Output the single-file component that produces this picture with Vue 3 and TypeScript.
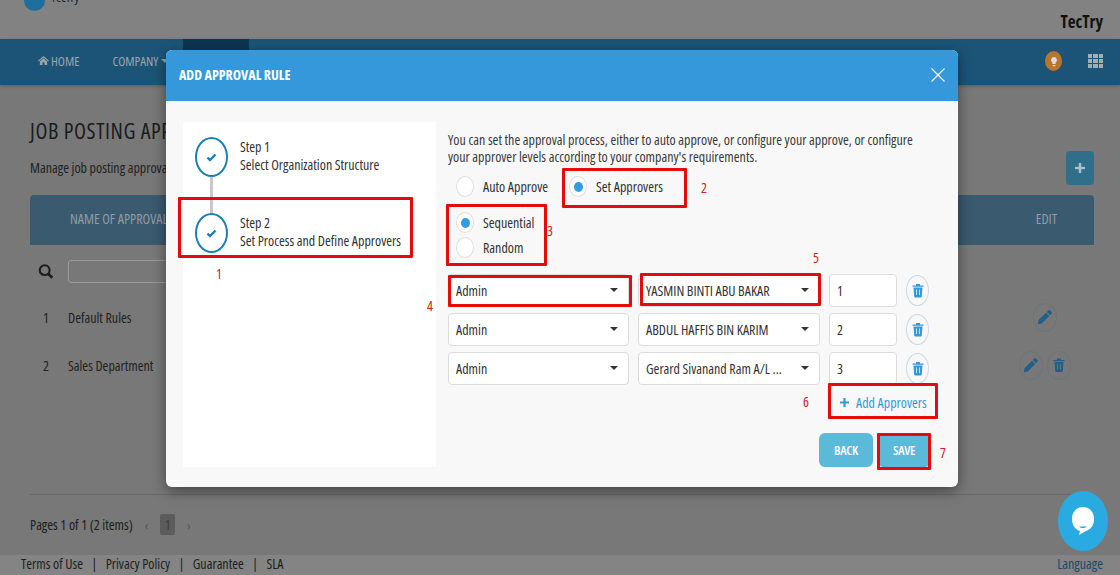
<script setup lang="ts">
interface Row { role: string; person: string; level: string }
const rows: Row[] = [
  { role: 'Admin', person: 'YASMIN BINTI ABU BAKAR', level: '1' },
  { role: 'Admin', person: 'ABDUL HAFFIS BIN KARIM', level: '2' },
  { role: 'Admin', person: 'Gerard Sivanand Ram A/L ...', level: '3' },
]
const steps = [
  { title: 'Step 1', sub: 'Select Organization Structure' },
  { title: 'Step 2', sub: 'Set Process and Define Approvers' },
]
const trashBody = 'M3.500 5h9l-.7 9a1 1 0 0 1-1 .9H5.200a1 1 0 0 1-1-.9zM2.500 3h3.500V1.500h4V3h3.500v1.200h-11z'
const pencil = 'M11.300 1.500a1.200 1.200 0 0 1 1.700 0l1.500 1.500a1.200 1.200 0 0 1 0 1.700L13 6.200 9.800 3zM9 3.800 12.200 7l-7.500 7.500-3.900.8.700-4z'
</script>

<template>
  <div class="page">
    <header class="top">
      <div class="logo"><span class="logo-mark"></span><span class="logo-text">TecTry</span></div>
      <div class="brand">TecTry</div>
    </header>
    <nav class="nav">
      <div class="nav-item home"><svg width="11" height="11" viewBox="0 0 12 12"><path d="M6 1 0 6.300l.8.7L6 2.600 11.200 7l.8-.7zM2 7v4h3V8h2v3h3V7L6 3.600z" fill="#9aa5ad"/></svg>HOME</div>
      <div class="nav-item company">COMPANY <i class="caret-nav"></i></div>
      <div class="nav-active"></div>
      <div class="nav-right">
        <span class="bulb"><svg width="12" height="14" viewBox="0 0 12 14"><path d="M6 3a3 3 0 0 0-1.600 5.500V10h3.200V8.500A3 3 0 0 0 6 3zM4.600 11h2.800v1.200H4.600z" fill="#ddd"/></svg></span>
        <div class="apps"><i v-for="n in 9" :key="n"></i></div>
      </div>
    </nav>
    <main class="main">
      <div class="title-row">
        <div>
          <h1>JOB POSTING APPROVAL</h1>
          <p class="sub">Manage job posting approval</p>
        </div>
        <span class="add-btn"><svg width="10" height="10" viewBox="0 0 10 10"><path d="M5 0v10M0 5h10" stroke="#a8c0cc" stroke-width="2.600"/></svg></span>
      </div>
      <div class="thead"><span>NAME OF APPROVAL</span><span>EDIT</span></div>
      <div class="search">
        <svg width="16" height="17" viewBox="0 0 18 18"><circle cx="7.500" cy="7.500" r="5.500" fill="none" stroke="#1d1d1d" stroke-width="2.400"/><path d="M11.500 11.500 16 16" stroke="#1d1d1d" stroke-width="3"/></svg>
        <span class="search-box"></span>
      </div>
      <div class="trow">
        <span class="num">1</span><span class="name">Default Rules</span>
        <span class="actions"><span class="ico"><svg width="16" height="16" viewBox="0 0 16 16"><path :d="pencil" fill="#1f5f88"/></svg></span></span>
      </div>
      <div class="trow">
        <span class="num">2</span><span class="name">Sales Department</span>
        <span class="actions">
          <span class="ico"><svg width="16" height="16" viewBox="0 0 16 16"><path :d="pencil" fill="#1f5f88"/></svg></span>
          <span class="ico"><svg width="16" height="16" viewBox="0 0 16 16"><path :d="trashBody" fill="#1f5f88"/><path d="M6.500 7v5.500M9.500 7v5.500" stroke="#777" stroke-width=".9"/></svg></span>
        </span>
      </div>
      <div class="pager">
        <span>Pages 1 of 1 (2 items)</span>
        <span class="pg-arrow">‹</span><span class="pg-cur">1</span><span class="pg-arrow">›</span>
      </div>
    </main>
    <footer class="foot">
      <div class="links"><span>Terms of Use</span><b>|</b><span>Privacy Policy</span><b>|</b><span>Guarantee</span><b>|</b><span>SLA</span></div>
      <span class="lang">Language</span>
    </footer>

    <div class="chat">
      <svg width="24" height="30" viewBox="0 0 24 30"><path d="M12 1C5.500 1 1 6 1 13c0 6 3.500 11 8 12l-1 4 7-4c5-1.500 8-6 8-12C23 6 18.500 1 12 1z" fill="#fff"/><path d="M8 20.500c2 2 6 2 8 0z" fill="#29abe2"/></svg>
    </div>

    <section class="modal">
      <div class="m-head">
        <span>ADD APPROVAL RULE</span>
        <svg width="14" height="14" viewBox="0 0 14 14"><path d="M.5.500l13 13M13.500.500l-13 13" stroke="#fff" stroke-width="1.100"/></svg>
      </div>
      <div class="m-body">
        <aside class="steps">
          <div v-for="(s, i) in steps" :key="s.title" class="step" :class="{ last: i === 1 }">
            <span class="step-dot"><svg width="11" height="9" viewBox="0 0 11 9"><path d="M1.500 4.500 4 7 9.500 1.500" fill="none" stroke="#1a7fb5" stroke-width="2.400"/></svg></span>
            <div class="step-text"><div>{{ s.title }}</div><div>{{ s.sub }}</div></div>
          </div>
        </aside>
        <div class="form">
          <p class="intro">You can set the approval process, either to auto approve, or configure your approve, or configure your approver levels according to your company's requirements.</p>
          <div class="radios-inline">
            <label class="radio"><i class="dot"></i>Auto Approve</label>
            <label class="radio second"><i class="dot on"></i>Set Approvers</label>
          </div>
          <div class="radios-stack">
            <label class="radio"><i class="dot on"></i>Sequential</label>
            <label class="radio"><i class="dot"></i>Random</label>
          </div>
          <div class="rows">
            <div v-for="r in rows" :key="r.level" class="row">
              <div class="sel role"><span>{{ r.role }}</span><i class="caret"></i></div>
              <div class="sel person"><span>{{ r.person }}</span><i class="caret"></i></div>
              <div class="lvl">{{ r.level }}</div>
              <span class="del"><svg width="16" height="17" viewBox="0 0 16 16"><path :d="trashBody" fill="#3498db"/><path d="M6.500 7v5.500M9.500 7v5.500" stroke="#d7ecf8" stroke-width=".9"/></svg></span>
            </div>
          </div>
          <div class="add-row"><svg width="9" height="9" viewBox="0 0 9 9"><path d="M4.500 0v9M0 4.500h9" stroke="#3498db" stroke-width="2.200"/></svg><span>Add Approvers</span></div>
          <div class="btns"><span class="btn">BACK</span><span class="btn">SAVE</span></div>
        </div>
      </div>
    </section>

    <i class="mark m1"></i><i class="mark m2"></i><i class="mark m3"></i><i class="mark m4"></i>
    <i class="mark m5"></i><i class="mark m6"></i><i class="mark m7"></i>
    <span class="tag t1">1</span><span class="tag t2">2</span><span class="tag t3">3</span><span class="tag t4">4</span>
    <span class="tag t5">5</span><span class="tag t6">6</span><span class="tag t7">7</span>
  </div>
</template>

<style>
html, body { margin: 0; padding: 0; overflow: hidden; }
</style>

<style scoped>
.page {
  position: relative; width: 1120px; height: 575px; overflow: hidden;
  display: flex; flex-direction: column;
  background: #787878; color: #2a2a2a;
  font-family: "Open Sans", sans-serif; font-stretch: 75%; font-size: 14px;
}
.top { height: 39px; flex: none; background: #828282; display: flex; justify-content: space-between; padding: 0 17px 0 24px; box-sizing: border-box; }
.logo { display: flex; gap: 6px; margin-top: -10px; height: 21px; align-items: flex-start; }
.logo-mark { width: 21px; height: 21px; border-radius: 50%; background: #1f6f9e; }
.logo-text { font-size: 13px; color: #222; line-height: 14px; }
.brand { font-size: 17px; font-weight: 700; color: #111; margin-top: 10px; line-height: 24px; }
.nav { height: 46px; flex: none; box-sizing: border-box; padding: 0 0 3px 38px; background: #1c5478; display: flex; align-items: center; color: #9aa5ad; font-size: 13px; position: relative; box-shadow: 0 1px 3px rgba(0,0,0,.25); }
.nav-item { display: flex; align-items: center; gap: 2px; }
.company { margin-left: 33px; gap: 3px; }
.caret-nav { width: 0; height: 0; border: 4px solid transparent; border-top-color: #9aa5ad; border-bottom: 0; }
.nav-active { position: absolute; left: 183px; top: 0; width: 66px; height: 46px; background: #0c3653; }
.nav-right { margin-left: auto; display: flex; align-items: center; gap: 26px; padding-right: 17px; }
.bulb { width: 17px; height: 20px; border-radius: 50%; background: #b8752c; display: flex; align-items: center; justify-content: center; }
.apps { width: 15px; height: 14px; display: grid; grid-template-columns: repeat(3, 1fr); gap: 1px; }
.apps i { background: #a6adb2; }
.main { flex: 1; padding: 0 26px 0 30px; display: flex; flex-direction: column; min-height: 0; }
.title-row { display: flex; justify-content: space-between; height: 110px; flex: none; }
h1 { margin: 32px 0 0; font-size: 22px; letter-spacing: .6px; font-weight: 400; color: #1c1c1c; line-height: 26px; white-space: nowrap; }
.sub { margin: 16px 0 0; font-size: 14px; line-height: 18px; color: #222; }
.add-btn { width: 28px; height: 34px; margin-top: 66px; border-radius: 4px; background: #2f6f8a; display: flex; align-items: center; justify-content: center; }
.thead { height: 50px; flex: none; box-sizing: border-box; padding: 0 37px 4px 40px; background: #3a5a70; border-radius: 4px 4px 0 0; color: #8f9ca5; font-size: 14px; display: flex; justify-content: space-between; align-items: center; }
.search { display: flex; align-items: center; gap: 14px; height: 48px; box-sizing: border-box; padding: 4px 0 0 8px; flex: none; }
.search-box { width: 200px; height: 21px; border: 1px solid #9a9a9a; border-radius: 3px; }
.trow { height: 48px; flex: none; display: flex; align-items: center; font-size: 14px; color: #222; }
.num { width: 38px; padding-left: 13px; box-sizing: border-box; }
.actions { margin-left: auto; margin-right: 23px; display: flex; gap: 4px; width: 52px; justify-content: center; }
.ico { width: 24px; height: 29px; box-sizing: border-box; border: 1.500px solid #6c757a; border-radius: 50%; display: flex; align-items: center; justify-content: center; flex: none; }
.pager { margin-top: 105px; border-top: 1px solid #686868; padding-top: 19px; display: flex; align-items: center; font-size: 14px; color: #1c1c1c; }
.pg-arrow { margin: 0 12px; color: #555; font-size: 13px; }
.pg-cur { width: 15px; height: 21px; border-radius: 2px; background: #5c5c5c; color: #3c3c3c; display: flex; align-items: center; justify-content: center; }
.foot { height: 20px; flex: none; box-sizing: border-box; padding: 0 17px 3px 21px; background: #848484; display: flex; justify-content: space-between; align-items: center; font-size: 14px; color: #1e1e1e; }
.links { display: flex; gap: 8.500px; }
.links b { font-weight: 400; }
.lang { color: #1a4a6a; }
.chat { position: absolute; left: 1058px; top: 491px; width: 50px; height: 60px; border-radius: 50%; background: #29abe2; display: flex; align-items: center; justify-content: center; }
.modal { position: absolute; left: 166px; top: 50px; width: 792px; height: 437px; border-radius: 6px; overflow: hidden; background: #f8f8f8; box-shadow: 0 4px 14px rgba(0,0,0,.45); display: flex; flex-direction: column; }
.m-head { height: 51px; flex: none; box-sizing: border-box; padding: 0 13px 2px; background: #3498db; display: flex; justify-content: space-between; align-items: center; color: #fff; font-size: 14px; font-weight: 700; }
.m-body { flex: 1; display: flex; padding: 21px 17px 20px; min-height: 0; gap: 12px; }
.steps { width: 253px; background: #fff; flex: none; padding: 15px 12px; box-sizing: border-box; }
.step { display: flex; gap: 12px; height: 76px; position: relative; }
.step:not(.last)::after { content: ""; position: absolute; left: 15px; top: 39px; width: 3px; height: 40px; background: #c9c9c9; }
.step-dot { width: 33px; height: 40px; flex: none; box-sizing: border-box; border: 2px solid #1a7fb5; border-radius: 50%; background: #fff; display: flex; align-items: center; justify-content: center; position: relative; z-index: 1; }
.step-text { font-size: 14px; line-height: 18px; color: #333; padding-top: 1px; white-space: nowrap; }
.form { flex: 1; min-width: 0; position: relative; }
.intro { margin: 0; font-size: 14px; line-height: 17px; color: #3a3a3a; width: 480px; padding-top: 9px; }
.radios-inline { display: flex; margin-top: 9px; height: 24px; }
.radio { display: flex; align-items: center; gap: 9px; font-size: 14px; color: #333; height: 25px; }
.radio.second { margin-left: 13px; }
.dot { width: 18px; height: 21px; box-sizing: border-box; border-radius: 50%; background: #fff; border: 1px solid #e0e0e0; display: flex; align-items: center; justify-content: center; margin-left: 8px; }
.dot.on::after { content: ""; width: 9px; height: 10px; border-radius: 50%; background: #2f9de4; }
.radios-stack { margin-top: 12px; display: flex; flex-direction: column; }
.rows { margin-top: 14px; display: flex; flex-direction: column; gap: 6px; }
.row { display: flex; align-items: center; height: 33px; }
.sel { height: 33px; box-sizing: border-box; border: 1px solid #dcdcdc; border-radius: 4px; background: #fff; display: flex; align-items: center; justify-content: space-between; padding: 0 10px 1px 7px; font-size: 14px; color: #333; white-space: nowrap; }
.role { width: 181px; }
.person { width: 182px; margin-left: 9px; }
.caret { width: 0; height: 0; border: 4px solid transparent; border-top-color: #333; border-bottom: 0; }
.lvl { width: 68px; height: 33px; box-sizing: border-box; margin-left: 9px; border: 1px solid #dcdcdc; border-radius: 4px; background: #fff; display: flex; align-items: center; padding: 0 0 1px 7px; font-size: 14px; color: #333; }
.del { width: 23px; height: 31px; margin-left: 9px; box-sizing: border-box; border: 1.500px solid #c9d8ea; border-radius: 50%; display: flex; align-items: center; justify-content: center; }
.add-row { margin: 6px 0 0 392px; height: 22px; display: flex; align-items: center; gap: 7px; color: #3498db; font-size: 14px; white-space: nowrap; }
.btns { position: absolute; right: 10px; bottom: 0; display: flex; gap: 4px; }
.btn { width: 54px; height: 34px; border-radius: 6px; background: #5bb9d9; color: #fff; font-weight: 600; font-size: 13px; letter-spacing: -.3px; padding-bottom: 1px; box-sizing: border-box; display: flex; align-items: center; justify-content: center; }
.mark { position: absolute; box-sizing: border-box; border: 3px solid #e30b0b; border-radius: 1px; }
.m1 { left: 178px; top: 197px; width: 235px; height: 61px; }
.m2 { left: 562px; top: 168px; width: 125px; height: 40px; }
.m3 { left: 446px; top: 204px; width: 101px; height: 62px; }
.m4 { left: 448px; top: 275px; width: 184px; height: 32px; }
.m5 { left: 640px; top: 273px; width: 181px; height: 33px; }
.m6 { left: 828px; top: 383px; width: 110px; height: 36px; }
.m7 { left: 877px; top: 433px; width: 54px; height: 37px; }
.tag { position: absolute; color: #d32020; font-size: 14px; line-height: 16px; }
.t1 { left: 216px; top: 266px; }
.t2 { left: 701px; top: 180px; }
.t3 { left: 547px; top: 223px; }
.t4 { left: 427px; top: 298px; }
.t5 { left: 813px; top: 250px; }
.t6 { left: 803px; top: 394px; }
.t7 { left: 940px; top: 445px; }
</style>
